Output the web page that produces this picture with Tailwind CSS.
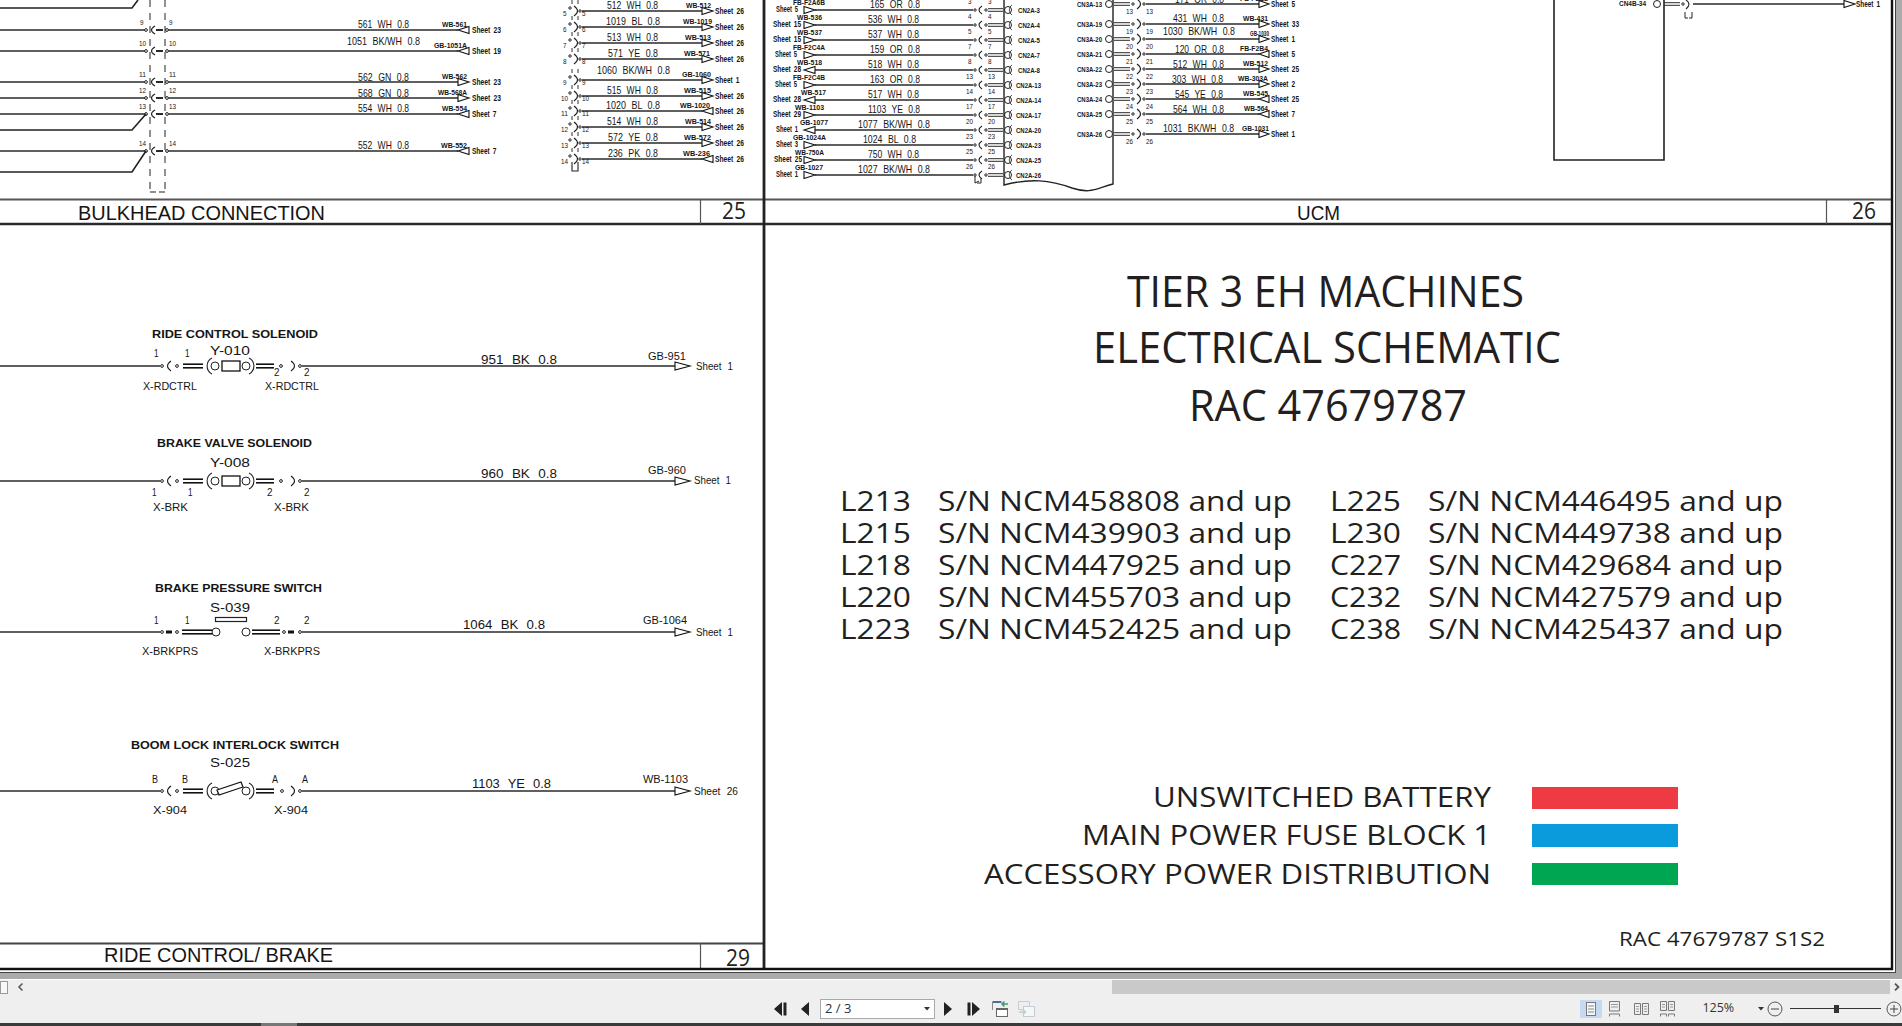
<!DOCTYPE html>
<html lang="en">

<head>
  <meta charset="UTF-8">
  <title>RAC 47679787 - Electrical Schematic</title>
  <script src="https://cdn.jsdelivr.net/npm/@tailwindcss/browser@4"></script>
</head>

<body class="bg-[#ababab] overflow-hidden">
  <div class="flex flex-col w-[1902px] h-[1026px]">

    <!-- document area -->
    <div class="h-[980px] bg-[#ababab] border-b border-white">
      <div class="w-[1896px] h-[973px] bg-white border-r border-b border-[#444]">
        <svg id="sheet" width="1895" height="972" viewBox="0 0 1895 972" class="block font-['Liberation_Sans',Arial,sans-serif] fill-[#151515]"></svg>
      </div>
    </div>

    <!-- horizontal scrollbar -->
    <div class="flex items-center h-[14px] bg-[#efefef] shrink-0">
      <div class="w-[8px] h-[13px] border border-[#999] bg-[#f8f8f8]"></div>
      <svg width="10" height="10" viewBox="0 0 10 10" class="ml-[8px]"><path d="M6.5 1.5 3 5l3.500 3.500" fill="none" stroke="#555" stroke-width="1.5" /></svg>
      <div class="ml-[1086px] w-[782px] h-[14px] bg-[#c9c9c9]"></div>
      <svg width="10" height="10" viewBox="0 0 10 10" class="ml-[2px]"><path d="M3 1.5 6.500 5 3 8.500" fill="none" stroke="#555" stroke-width="1.8" /></svg>
    </div>

    <!-- bottom toolbar -->
    <div class="flex items-center h-[29px] bg-[#efefef] shrink-0 font-['Open_Sans',sans-serif] text-[#333]">
      <svg width="13" height="14" viewBox="0 0 13 14" class="ml-[774px]"><path d="M8 0v14L0 7z" fill="#222" /><rect x="9.500" y="0.500" width="3" height="13" fill="#222" /></svg>
      <svg width="8" height="14" viewBox="0 0 8 14" class="ml-[14px]"><path d="M8 0v14L0 7z" fill="#222" /></svg>
      <div class="flex items-center justify-between ml-[11px] w-[115px] h-[20px] px-[4px] bg-white border border-[#aaa] text-[13px]">
        <span>2 / 3</span>
        <svg width="6" height="4" viewBox="0 0 6 4"><path d="M0 0h6L3 3.500z" fill="#333" /></svg>
      </div>
      <svg width="8" height="14" viewBox="0 0 8 14" class="ml-[9px]"><path d="M0 0v14l8-7z" fill="#222" /></svg>
      <svg width="13" height="14" viewBox="0 0 13 14" class="ml-[15px]"><rect x="0.500" y="0.500" width="3" height="13" fill="#222" /><path d="M5 0v14l8-7z" fill="#222" /></svg>
      <svg width="17" height="16" viewBox="0 0 17 16" class="ml-[12px]">
        <path d="M.5 1h9" stroke="#4a6d9c" stroke-width="2" /><path d="M.5 1v8" stroke="#888" />
        <path d="M16 3h-6M12.500 .5 10 3l2.500 2.500" fill="none" stroke="#3e9a6b" stroke-width="1.500" />
        <rect x="4.500" y="7.500" width="11" height="8" fill="#fff" stroke="#666" /><path d="M4.500 8h11" stroke="#666" stroke-width="2" />
      </svg>
      <svg width="17" height="16" viewBox="0 0 17 16" class="ml-[9px] opacity-50">
        <rect x=".5" y=".5" width="11" height="8" fill="none" stroke="#aaa" />
        <rect x="5.500" y="5.500" width="11" height="10" fill="#fff" stroke="#9ab" />
        <path d="M1 11h6M5 8.500 7.500 11 5 13.500" fill="none" stroke="#7bbf9c" stroke-width="1.500" />
      </svg>

      <div class="flex items-center justify-center ml-[545px] w-[23px] h-[18px] bg-[#c5d9f1]">
        <svg width="10" height="14" viewBox="0 0 10 14"><rect x=".5" y=".5" width="9" height="13" fill="#f4f7fb" stroke="#777" /><path d="M2 4h6M2 7h6M2 10h6" stroke="#888" /></svg>
      </div>
      <svg width="11" height="16" viewBox="0 0 11 16" class="ml-[7px]"><path d="M.5 10V.5h10V10zM.5 15.500V13h10v2.500" fill="none" stroke="#777" /><path d="M2 3.500h7M2 6h7" stroke="#999" /></svg>
      <svg width="15" height="12" viewBox="0 0 15 12" class="ml-[14px]"><path d="M.5.500h6v11h-6zM8.500.500h6v11h-6z" fill="none" stroke="#777" /><path d="M2 3.500h3M2 6h3M2 8.500h3M10 3.500h3M10 6h3M10 8.500h3" stroke="#999" /></svg>
      <svg width="15" height="16" viewBox="0 0 15 16" class="ml-[11px]"><path d="M.5.500h6v9h-6zM8.500.500h6v9h-6zM.5 15.500V13h6v2.500M8.500 15.500V13h6v2.500" fill="none" stroke="#777" /><path d="M2 3.500h3M2 6h3M10 3.500h3M10 6h3" stroke="#999" /></svg>
      <span class="ml-[27px] w-[33px] text-[12.500px]">125%</span>
      <svg width="6" height="4" viewBox="0 0 6 4" class="ml-[23px]"><path d="M0 0h6L3 3.500z" fill="#333" /></svg>
      <svg width="16" height="16" viewBox="0 0 16 16" class="ml-[3px]"><circle cx="8" cy="8" r="7" fill="none" stroke="#555" /><path d="M4 8h8" stroke="#444" /></svg>
      <div class="relative ml-[7px] w-[91px] h-[1px] bg-[#333]">
        <div class="absolute left-[44px] -top-[3px] w-[5px] h-[8px] bg-[#333]"></div>
      </div>
      <svg width="16" height="16" viewBox="0 0 16 16" class="ml-[5px]"><circle cx="8" cy="8" r="7" fill="none" stroke="#555" /><path d="M4 8h8M8 4v8" stroke="#444" /></svg>
    </div>

    <!-- sliver of the window behind -->
    <div class="flex h-[3px] bg-[#3a3a3a] shrink-0">
      <div class="ml-[261px] w-[36px] bg-[#777]"></div>
    </div>
  </div>

  <script>
    const parts = [];
    const LIGHT = "font-['Open_Sans',sans-serif] fill-[#231f20]";
    const GAPPED = '[word-spacing:0.35em]';
    const SMALL_BOLD = 'font-bold [word-spacing:0.2em]';

    function text(x, y, str, width, size, cls = '') {
      parts.push(`<text x="${x}" y="${y}" font-size="${size}" textLength="${width}" lengthAdjust="spacingAndGlyphs" class="${cls}">${str}</text>`);
    }
    function label(x, y, str, width, size = 11) {
      text(x, y, str, width, size, GAPPED);
    }
    function line(x1, y1, x2, y2, w = 1.6, color = '#2a2a2a', extra = '') {
      parts.push(`<line x1="${x1}" y1="${y1}" x2="${x2}" y2="${y2}" stroke="${color}" stroke-width="${w}" ${extra}/>`);
    }
    function dot(x, y, r = 1.4) {
      parts.push(`<circle cx="${x}" cy="${y}" r="${r}" fill="#fff" stroke="#222" stroke-width="1"/>`);
    }
    function arc(d, w = 1.1) {
      parts.push(`<path d="${d}" fill="none" stroke="#222" stroke-width="${w}"/>`);
    }
    // off-sheet arrow, rev = tip points back at the page edge
    function arrow(x, y, rev, len = 11, h = 3.5) {
      const pts = rev ? `${x},${y} ${x + len},${y - h} ${x + len},${y + h}` : `${x},${y - h} ${x + len},${y} ${x},${y + h}`;
      parts.push(`<polygon points="${pts}" fill="#fff" stroke="#111" stroke-width="1.1"/>`);
    }
    function sheetRef(x, y, str) {
      text(x, y + 3, str, str.length > 7 ? 29 : 24.5, 8.5, SMALL_BOLD);
    }
    function pinNo(x, y, n) {
      text(x, y, n, n.length > 1 ? 7 : 3.5, 8);
    }

    // ---- bulkhead connection ----
    [
      [30, '561 WH 0.8', 358, 51, -2, 'WB-561', 442, 25, 1, 'Sheet 23', '9'],
      [51, '1051 BK/WH 0.8', 347, 73, -6, 'GB-1051A', 434, 33, 1, 'Sheet 19', '10'],
      [82, '562 GN 0.8', 358, 51, -1, 'WB-562', 442, 25, 0, 'Sheet 23', '11'],
      [98, '568 GN 0.8', 358, 51, -1, 'WB-568A', 438, 29, 0, 'Sheet 23', '12'],
      [114, '554 WH 0.8', 358, 51, -2, 'WB-554', 442, 25, 1, 'Sheet 7', '13'],
      [151, '552 WH 0.8', 358, 51, -2, 'WB-552', 441, 26, 1, 'Sheet 7', '14'],
    ].forEach(([y, lab, lx, lw, ly, tag, tx, tw, rev, sheet, n]) => {
      line(0, y, 145, y);
      line(168, y, 458, y);
      dot(146, y);
      arc(`M155 ${y - 4}Q148 ${y} 155 ${y + 4}`);
      line(156, y, 163, y, 2);
      dot(167, y);
      label(lx, y + ly, lab, lw);
      text(tx, y - 3.5, tag, tw, 8, 'font-bold');
      arrow(458, y, rev);
      sheetRef(472, y, sheet);
      pinNo(n.length > 1 ? 139 : 140, y - 5, n);
      pinNo(169, y - 5, n);
    });
    arc('M0 8H132L138 0', 1.6);
    arc('M0 130H132L146 114', 1.6);
    arc('M0 172H132L146 151', 1.6);
    line(150, 0, 150, 192, 1, '#222', 'stroke-dasharray="7 6"');
    line(165, 0, 165, 192, 1, '#222', 'stroke-dasharray="7 6"');
    arc('M150 192H156M159 192H165');

    // ---- bulkhead, second column ----
    [
      [11, '512 WH 0.8', 607, 51, 'WB-512', 686, 25, 0, 'Sheet 26', '5'],
      [27, '1019 BL 0.8', 606, 54, 'WB-1019', 683, 29, 0, 'Sheet 26', '6'],
      [43, '513 WH 0.8', 607, 51, 'WB-513', 685, 26, 0, 'Sheet 26', '7'],
      [59, '571 YE 0.8', 608, 50, 'WB-571', 684, 26, 0, 'Sheet 26', '8'],
      [80, '1060 BK/WH 0.8', 597, 73, 'GB-1060', 682, 29, 0, 'Sheet 1', '9'],
      [96, '515 WH 0.8', 607, 51, 'WB-515', 684, 27, 0, 'Sheet 26', '10'],
      [111, '1020 BL 0.8', 606, 54, 'WB-1020', 680, 30, 1, 'Sheet 26', '11'],
      [127, '514 WH 0.8', 607, 51, 'WB-514', 685, 26, 0, 'Sheet 26', '12'],
      [143, '572 YE 0.8', 608, 50, 'WB-572', 684, 27, 0, 'Sheet 26', '13'],
      [159, '236 PK 0.8', 608, 50, 'WB-236', 683, 27, 1, 'Sheet 26', '14'],
    ].forEach(([y, lab, lx, lw, tag, tx, tw, rev, sheet, n]) => {
      line(582, y, 702, y);
      dot(570, y - 3, 1.2);
      arc(`M574 ${y - 5}Q581 ${y} 574 ${y + 5}`);
      dot(580, y, 1.2);
      label(lx, y - (n === '9' ? 6 : 2), lab, lw);
      text(tx, y - 3.5, tag, tw, 8, 'font-bold');
      arrow(702, y, rev);
      sheetRef(715, y, sheet);
      pinNo(n.length > 1 ? 561 : 563, y + 5, n);
      pinNo(582, y + 5, n);
      line(572, y - 11, 572, y - 7, 1, '#333');
      line(578, y - 11, 578, y - 7, 1, '#333');
    });
    arc('M572 162V171H575M578 162V171H575');

    // ---- UCM, connector CN2A ----
    [
      [10, 'Sheet 5', 776, 0, 'FB-F2A6B', 793, 32, '165 OR 0.8', 870, 50, '3', 'CN2A-3'],
      [25, 'Sheet 15', 773, 0, 'WB-536', 797, 25, '536 WH 0.8', 868, 51, '4', 'CN2A-4'],
      [40, 'Sheet 15', 773, 0, 'WB-537', 797, 25, '537 WH 0.8', 868, 51, '5', 'CN2A-5'],
      [55, 'Sheet 5', 775, 0, 'FB-F2C4A', 793, 32, '159 OR 0.8', 870, 50, '7', 'CN2A-7'],
      [70, 'Sheet 28', 773, 1, 'WB-518', 797, 25, '518 WH 0.8', 868, 51, '8', 'CN2A-8'],
      [85, 'Sheet 5', 775, 0, 'FB-F2C4B', 793, 32, '163 OR 0.8', 870, 50, '13', 'CN2A-13'],
      [100, 'Sheet 28', 773, 1, 'WB-517', 801, 25, '517 WH 0.8', 868, 51, '14', 'CN2A-14'],
      [115, 'Sheet 29', 773, 0, 'WB-1103', 795, 29, '1103 YE 0.8', 868, 52, '17', 'CN2A-17'],
      [130, 'Sheet 1', 776, 1, 'GB-1077', 800, 28, '1077 BK/WH 0.8', 858, 72, '20', 'CN2A-20'],
      [145, 'Sheet 3', 776, 0, 'GB-1024A', 793, 33, '1024 BL 0.8', 863, 53, '23', 'CN2A-23'],
      [160, 'Sheet 25', 774, 0, 'WB-750A', 795, 29, '750 WH 0.8', 868, 51, '25', 'CN2A-25'],
      [175, 'Sheet 1', 776, 0, 'GB-1027', 795, 28, '1027 BK/WH 0.8', 858, 72, '26', 'CN2A-26'],
    ].forEach(([y, sheet, sx, rev, tag, tx, tw, lab, lx, lw, n, pin]) => {
      line(815, y, 973, y);
      arrow(804, y, rev);
      text(sx, y + 2, sheet, sheet.length > 7 ? 28 : 22, 8.5, SMALL_BOLD);
      text(tx, y - 5, tag, tw, 7.5, 'font-bold');
      label(lx, y - 2, lab, lw);
      dot(975, y, 1.2);
      arc(`M982 ${y - 4}Q976 ${y} 982 ${y + 4}`);
      dot(986, y, 1.2);
      line(988, y - 1.3, 1003, y - 1.3, 1);
      line(988, y + 1.3, 1003, y + 1.3, 1);
      parts.push(`<circle cx="1008" cy="${y}" r="3.500" fill="#fff" stroke="#222" stroke-width="1"/>`);
      arc(`M1012 ${y - 5}A6 6 0 0 0 1012 ${y + 5}`, .8);
      pinNo(n.length > 1 ? 966 : 968, y - 6, n);
      pinNo(988, y - 6, n);
      text(n.length > 1 ? 1016 : 1018, y + 2.5, pin, n.length > 1 ? 25 : 22, 7.5, 'font-bold');
    });
    arc('M1004 0V185C1030 178 1050 180 1072 188C1090 194 1095 189 1113 184V0', 1.4);
    arc('M975 176V183L979 181M977 183H981V178', 1);

    // ---- UCM, connector CN3A ----
    [
      [4, '171 OR 0.8', 1175, 49, -1, 'FB-F2B2', 1240, 28, 0, 'Sheet 5', '13'],
      [24, '431 WH 0.8', 1173, 51, -2, 'WB-431', 1243, 25, 0, 'Sheet 33', '19'],
      [39, '1030 BK/WH 0.8', 1163, 72, -4, 'GB-1030', 1250, 19, 0, 'Sheet 1', '20'],
      [54, '120 OR 0.8', 1175, 49, -1, 'FB-F2B4', 1240, 28, 1, 'Sheet 5', '21'],
      [69, '512 WH 0.8', 1173, 51, -1, 'WB-512', 1243, 25, 0, 'Sheet 25', '22'],
      [84, '303 WH 0.8', 1172, 51, -1, 'WB-303A', 1238, 30, 0, 'Sheet 2', '23'],
      [99, '545 YE 0.8', 1175, 48, -1, 'WB-545', 1243, 25, 1, 'Sheet 25', '24'],
      [114, '564 WH 0.8', 1173, 51, -1, 'WB-564', 1244, 24, 1, 'Sheet 7', '25'],
      [134, '1031 BK/WH 0.8', 1163, 71, -2, 'GB-1031', 1242, 27, 0, 'Sheet 1', '26'],
    ].forEach(([y, lab, lx, lw, ly, tag, tx, tw, rev, sheet, n]) => {
      line(1146, y, 1259, y);
      parts.push(`<circle cx="1109" cy="${y}" r="3.500" fill="#fff" stroke="#222" stroke-width="1"/>`);
      line(1114, y - 1.3, 1130, y - 1.3, 1);
      line(1114, y + 1.3, 1130, y + 1.3, 1);
      dot(1133, y, 1.2);
      arc(`M1137 ${y - 5}Q1144 ${y} 1137 ${y + 5}`);
      dot(1144, y, 1.2);
      label(lx, y + ly, lab, lw);
      text(tx, y - 3.5, tag, tw, 7.5, 'font-bold');
      arrow(1259, y, rev, 10);
      text(1271, y + 3, sheet, sheet.length > 7 ? 28 : 24, 8.5, SMALL_BOLD);
      text(1077, y + 2.5, `CN3A-${n}`, 25, 7.5, 'font-bold');
      pinNo(1126, y + 10, n);
      pinNo(1146, y + 10, n);
    });

    // ---- UCM, connector CN4B ----
    arc('M1554 0V160H1664V0', 1.6);
    text(1619, 6, 'CN4B-34', 27, 7.5, 'font-bold');
    parts.push('<circle cx="1657" cy="4" r="3.500" fill="#fff" stroke="#222" stroke-width="1"/>');
    line(1664, 2.7, 1680, 2.7, 1);
    line(1664, 5.3, 1680, 5.3, 1);
    dot(1683, 4, 1.2);
    arc('M1686 0Q1692 4 1686 9');
    line(1693, 4, 1844, 4);
    arrow(1844, 4, 0);
    text(1856, 7, 'Sheet 1', 24, 8.5, SMALL_BOLD);
    arc('M1685 12V18H1688M1692 12V18H1689', 1);

    // ---- ride control / brake ----
    function connectorLabels(c) {
      text(c.titleX, c.titleY, c.title, c.titleW, 11.5, 'font-bold');
      text(210, c.refY, c.ref, 40, 13);
      line(0, c.y, 160, c.y);
      line(302, c.y, 675, c.y);
      arrow(675, c.y, 0, 15, 4);
      text(c.sheetX, c.sheetY, c.sheet, c.sheetW, 10, GAPPED);
      label(c.wireX, c.wireY, c.wire, c.wireW, 13);
      text(c.tagX, c.tagY, c.tag, c.tagW, 10);
      text(c.xL, c.xY, c.x, c.xW, 10.5);
      text(c.xR, c.xY, c.x, c.xW, 10.5);
      dot(162, c.y);
      dot(300, c.y);
    }
    function plugBars(x1, x2, y) {
      line(x1, y - 1.8, x2, y - 1.8, 1.6, '#111');
      line(x1, y + 1.8, x2, y + 1.8, 1.6, '#111');
    }
    function solenoid(y) {
      arc(`M171 ${y - 5}Q164 ${y} 171 ${y + 5}`);
      dot(177, y);
      plugBars(183, 203, y);
      arc(`M212 ${y - 8}A9 9 0 0 0 212 ${y + 8}`);
      parts.push(`<circle cx="215" cy="${y}" r="4" fill="#fff" stroke="#222"/>`);
      parts.push(`<rect x="222" y="${y - 5}" width="18" height="10" fill="#fff" stroke="#111" stroke-width="1.300"/>`);
      parts.push(`<circle cx="246" cy="${y}" r="4" fill="#fff" stroke="#222"/>`);
      arc(`M249 ${y - 8}A9 9 0 0 1 249 ${y + 8}`);
      plugBars(256, 274, y);
      dot(281, y);
      arc(`M291 ${y - 5}Q298 ${y} 291 ${y + 5}`);
    }

    connectorLabels({ title: 'RIDE CONTROL SOLENOID', titleX: 152, titleY: 338, titleW: 166, ref: 'Y-010', refY: 355, y: 366, sheet: 'Sheet 1', sheetX: 696, sheetY: 370, sheetW: 37, wire: '951 BK 0.8', wireX: 481, wireY: 364, wireW: 76, tag: 'GB-951', tagX: 648, tagY: 360, tagW: 38, x: 'X-RDCTRL', xL: 143, xR: 265, xY: 390, xW: 54 });
    solenoid(366);
    text(154, 357, '1', 4.5, 10); text(185, 357, '1', 4.5, 10); text(274, 376, '2', 5.5, 10); text(304, 376, '2', 5.5, 10);

    connectorLabels({ title: 'BRAKE VALVE SOLENOID', titleX: 157, titleY: 447, titleW: 155, ref: 'Y-008', refY: 467, y: 481, sheet: 'Sheet 1', sheetX: 694, sheetY: 484, sheetW: 37, wire: '960 BK 0.8', wireX: 481, wireY: 478, wireW: 76, tag: 'GB-960', tagX: 648, tagY: 474, tagW: 38, x: 'X-BRK', xL: 153, xR: 274, xY: 511, xW: 35 });
    solenoid(481);
    text(152, 496, '1', 4.5, 10); text(188, 496, '1', 4.5, 10); text(267, 496, '2', 5.5, 10); text(304, 496, '2', 5.5, 10);

    connectorLabels({ title: 'BRAKE PRESSURE SWITCH', titleX: 155, titleY: 592, titleW: 167, ref: 'S-039', refY: 612, y: 632, sheet: 'Sheet 1', sheetX: 696, sheetY: 636, sheetW: 37, wire: '1064 BK 0.8', wireX: 463, wireY: 629, wireW: 82, tag: 'GB-1064', tagX: 643, tagY: 624, tagW: 44, x: 'X-BRKPRS', xL: 142, xR: 264, xY: 655, xW: 56 });
    line(166, 632, 172, 632, 3, '#111'); dot(177, 632);
    plugBars(182, 212, 632);
    parts.push('<circle cx="216" cy="632" r="4" fill="#fff" stroke="#222"/><circle cx="246" cy="632" r="4" fill="#fff" stroke="#222"/>');
    parts.push('<rect x="215.500" y="617.500" width="31" height="4" fill="#fff" stroke="#222" stroke-width="1.200"/>');
    plugBars(252, 280, 632);
    dot(284, 632); line(288, 632, 294, 632, 3, '#111');
    text(154, 624, '1', 4.5, 10); text(185, 624, '1', 4.5, 10); text(274, 624, '2', 5.5, 10); text(304, 624, '2', 5.5, 10);

    connectorLabels({ title: 'BOOM LOCK INTERLOCK SWITCH', titleX: 131, titleY: 749, titleW: 208, ref: 'S-025', refY: 767, y: 791, sheet: 'Sheet 26', sheetX: 694, sheetY: 795, sheetW: 44, wire: '1103 YE 0.8', wireX: 472, wireY: 788, wireW: 79, tag: 'WB-1103', tagX: 643, tagY: 783, tagW: 45, x: 'X-904', xL: 153, xR: 274, xY: 814, xW: 34 });
    arc('M171 786Q164 791 171 796');
    dot(177, 791);
    plugBars(183, 203, 791);
    arc('M212 783A9 9 0 0 0 212 799');
    parts.push('<circle cx="215" cy="791" r="4" fill="#fff" stroke="#222"/><circle cx="246" cy="791" r="4" fill="#fff" stroke="#222"/>');
    parts.push('<polygon points="217,790 241,782 243,787 219,795" fill="#fff" stroke="#111" stroke-width="1.200"/>');
    arc('M249 783A9 9 0 0 1 249 799');
    plugBars(256, 274, 791);
    dot(282, 791);
    arc('M291 786Q298 791 291 796');
    text(152, 783, 'B', 6, 10); text(182, 783, 'B', 6, 10); text(272, 783, 'A', 6, 10); text(302, 783, 'A', 6, 10);

    // ---- title blocks and frame ----
    line(0, 199.5, 1892, 199.5, 2, '#555');
    line(0, 224, 1892, 224, 2.5, '#2a2a2a');
    line(0, 943.5, 764, 943.5, 2, '#444');
    line(764, 0, 764, 968, 2.8, '#222');
    line(700.5, 199, 700.5, 224, 1.2, '#555');
    line(700.5, 943, 700.5, 968, 1.2, '#555');
    line(1826.5, 199, 1826.5, 224, 1.2, '#555');
    text(78, 219.5, 'BULKHEAD CONNECTION', 247, 21);
    text(1297, 219.5, 'UCM', 43, 21);
    text(104, 962, 'RIDE CONTROL/ BRAKE', 229, 21);
    text(722, 219, '25', 24, 23, LIGHT);
    text(1852, 219, '26', 24, 23, LIGHT);
    text(726, 966, '29', 24, 23, LIGHT);

    // ---- cover sheet ----
    text(1127, 307, 'TIER 3 EH MACHINES', 397, 43, LIGHT);
    text(1093, 363, 'ELECTRICAL SCHEMATIC', 468, 43, LIGHT);
    text(1189, 421, 'RAC 47679787', 278, 43, LIGHT);
    [
      [511, 'L213', 'NCM458808', 'L225', 'NCM446495'],
      [543, 'L215', 'NCM439903', 'L230', 'NCM449738'],
      [575, 'L218', 'NCM447925', 'C227', 'NCM429684'],
      [607, 'L220', 'NCM455703', 'C232', 'NCM427579'],
      [639, 'L223', 'NCM452425', 'C238', 'NCM425437'],
    ].forEach(([y, m1, sn1, m2, sn2]) => {
      text(840, y, m1, 71, 27, LIGHT);
      text(938, y, `S/N ${sn1} and up`, 354, 27, LIGHT);
      text(1330, y, m2, 71, 27, LIGHT);
      text(1428, y, `S/N ${sn2} and up`, 355, 27, LIGHT);
    });
    text(1153, 807, 'UNSWITCHED BATTERY', 338, 28, LIGHT);
    text(1082, 845, 'MAIN POWER FUSE BLOCK 1', 409, 28, LIGHT);
    text(984, 884, 'ACCESSORY POWER DISTRIBUTION', 507, 28, LIGHT);
    parts.push('<rect x="1532" y="787" width="146" height="22" fill="#ee3a43"/>');
    parts.push('<rect x="1532" y="824" width="146" height="23" fill="#0a9bdc"/>');
    parts.push('<rect x="1532" y="863" width="146" height="22" fill="#00a651"/>');
    text(1619, 946, 'RAC 47679787 S1S2', 206, 20, LIGHT);

    // page frame sits on top
    line(0, 969, 1893, 969, 2.4, '#111');
    line(1892, 0, 1892, 970, 2.4, '#111');

    document.getElementById('sheet').innerHTML = parts.join('');
  </script>
</body>

</html>
